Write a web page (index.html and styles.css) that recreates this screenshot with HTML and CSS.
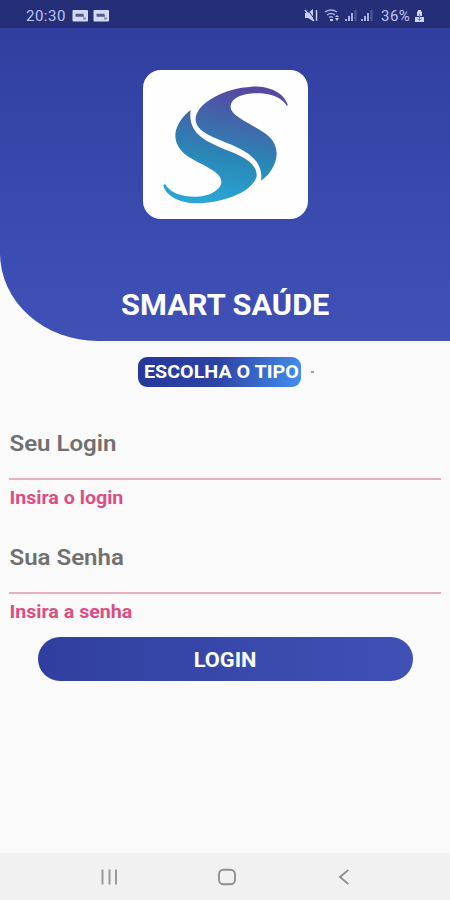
FILE: index.html
```html
<!DOCTYPE html>
<html lang="pt-BR">
<head>
<meta charset="utf-8">
<title>Smart Saúde</title>
<link rel="stylesheet" href="styles.css">
</head>
<body>
<div class="screen">
  <div class="status">
    <span class="clock">20:30</span>
    <svg class="notes" width="38" height="14" viewBox="0 0 38 14">
      <g id="note"><rect x="0.5" y="1" width="15.5" height="11.5" rx="1" fill="#d3d9f2"/><path d="M3.5 5.5h8M3.5 7h8.500" stroke="#555b88" stroke-width="1.500"/><path d="M11 9.500h3" stroke="#8289b4" stroke-width="2"/></g>
      <use href="#note" x="21"/>
    </svg>
    <svg class="signals" width="72" height="16" viewBox="0 0 72 16" fill="#c9cff0">
      <path d="M1 5h3l5-4v12l-5-3H1z"/><path d="M1 2l9 11M12.500 2v11" stroke="#c9cff0" stroke-width="1.500"/><path d="M3 1l9 12" stroke="#25307a"/>
      <g fill="none" stroke="#a6aede" stroke-width="1.400"><path d="M21 4q6-4 12 0M23 7q4-3 8 0M25 9.500q2-1.500 4 0"/></g>
      <path d="M26 11h3v2h-3zM31 9l2-2 2 2zM31 10h4l-2 3z"/>
      <g id="bars" opacity=".8"><path d="M41 11h2v2h-2zM44 8h2v5h-2zM47 5h2v8h-2z"/><path d="M50.500 2h2v11h-2z" opacity=".35"/></g>
      <use href="#bars" x="16"/>
    </svg>
    <span class="percent">36%</span>
    <svg class="battery" width="11" height="14" viewBox="0 0 11 14"><path d="M4 1h3v1.500h1V7H3V2.500h1zM1 8h9v5H1z" fill="#cfd5f2"/><path d="M5.500 5v6M3.500 9.500l2 2 2-2" fill="none" stroke="#747daf"/></svg>
  </div>
  <header class="hero">
    <div class="logo">
      <svg width="165" height="149" viewBox="24 30 495 448" preserveAspectRatio="none">
        <defs><linearGradient id="blue" gradientUnits="userSpaceOnUse" x1="310" y1="80" x2="250" y2="430"><stop offset="0" stop-color="#5648a0"/><stop offset=".3" stop-color="#4266aa"/><stop offset=".62" stop-color="#2988b7"/><stop offset="1" stop-color="#2aa5d6"/></linearGradient></defs>
        <g fill="url(#blue)">
          <path d="M459 137C446 94 397 78 350 80C270 84 180 130 182 180C184 215 235 232 288 254C340 277 386 305 378 363C405 345 426 310 425 280C423 230 380 215 340 190C305 170 285 155 287 138C292 105 345 97 385 101C425 106 444 120 455 137Z"/>
          <path d="M167 150C135 175 120 205 121 230C124 275 165 295 200 313C235 333 260 345 259 368C255 395 215 411 180 411C140 411 105 400 90 373L85 376C92 412 140 431 185 431C260 430 350 400 365 350C366 308 325 290 268 268C210 244 157 220 167 150Z"/>
        </g>
      </svg>
    </div>
    <h1>SMART SAÚDE</h1>
  </header>
  <main>
    <div class="picker"><button class="type"><span>ESCOLHA O TIPO</span></button><i class="dot"></i></div>
    <div class="field"><label><span>Seu Login</span></label><p>Insira o login</p></div>
    <div class="field"><label><span>Sua Senha</span></label><p>Insira a senha</p></div>
    <button class="login"><span>LOGIN</span></button>
  </main>
  <nav>
    <svg width="18" height="18" viewBox="0 0 18 18"><path d="M2.500 1.500v15M9.500 1.500v15M16 1.500v15" stroke="#999" stroke-width="2"/></svg>
    <svg width="20" height="18" viewBox="0 0 20 18"><rect x="1" y="1.700" width="16" height="14.600" rx="4.500" fill="none" stroke="#909090" stroke-width="1.900"/></svg>
    <svg width="12" height="18" viewBox="0 0 12 18"><path d="M10.300 2L2 9l8.300 7" fill="none" stroke="#909090" stroke-width="1.900"/></svg>
  </nav>
</div>
</body>
</html>
```
FILE: styles.css
```css
* { box-sizing: border-box; }
body { margin: 0; font-family: Roboto, sans-serif; background: #fafafa; }
button { border: 0; padding: 0; font-family: inherit; color: #fff; font-weight: 700; }
.screen { width: 450px; height: 900px; display: flex; flex-direction: column; overflow: hidden; }
.status { height: 28px; flex: none; display: flex; align-items: center; padding: 3px 0 0 26px; background: #252f78; color: #bdc4ec; font-size: 15px; font-weight: 400; }
.clock { width: 46px; letter-spacing: .5px; }
.signals { margin-left: 194px; }
.percent { margin-left: 5px; width: 33px; letter-spacing: .5px; }
.hero { height: 313px; flex: none; display: flex; flex-direction: column; align-items: center; padding-top: 42px; border-bottom-left-radius: 98px 88px; background: linear-gradient(#303f9f, #3c4db3 75%, #3f51b5); }
.logo { width: 165px; height: 149px; border-radius: 18px; background: #fefefe; }
.logo svg { display: block; }
h1 { margin: 69px 0 0; font-size: 29px; line-height: 34px; font-weight: 700; color: #fff; transform: scaleX(1.06); white-space: nowrap; }
main { flex: 1; display: flex; flex-direction: column; }
.picker { display: flex; align-items: center; margin: 16px 0 0 138px; height: 30px; }
.type { width: 163px; height: 30px; border-radius: 9px; background: linear-gradient(100deg, #27379a, #2d42a5 48%, #438fed); font-size: 18px; line-height: 30px; white-space: nowrap; text-align: left; padding: 0 0 0 5.5px; }
.type span, label span { display: inline-block; transform: scaleX(1.095); transform-origin: left; }
.dot { width: 3px; height: 2px; margin-left: 10px; background: #9aa8a8; }
.field { height: 114px; margin: 0 9px; }
.picker + .field { margin-top: 41px; }
label { display: flex; height: 52px; padding: 2px 0 0; border-bottom: 2px solid #e6b0bf; font-size: 22px; line-height: 28px; font-weight: 600; color: #707070; }
label span { transform: translateX(.5px) scaleX(1.093); }
.field p { margin: 6px 0 0; font-size: 18px; line-height: 22px; font-weight: 700; color: #dc4d84; transform: translate(.5px, .5px) scaleX(1.09); transform-origin: left; }
.login { width: 375px; height: 44px; margin: -19px 0 0 38px; border-radius: 22px; background: linear-gradient(90deg, #303f9f, #3f51b5); font-size: 19.5px; }
.login span { display: inline-block; transform: translateY(1px) scaleX(1.12); }
nav { height: 47px; flex: none; display: flex; align-items: center; justify-content: space-between; padding: 1px 100px 0; background: #f1f1f1; }
```
